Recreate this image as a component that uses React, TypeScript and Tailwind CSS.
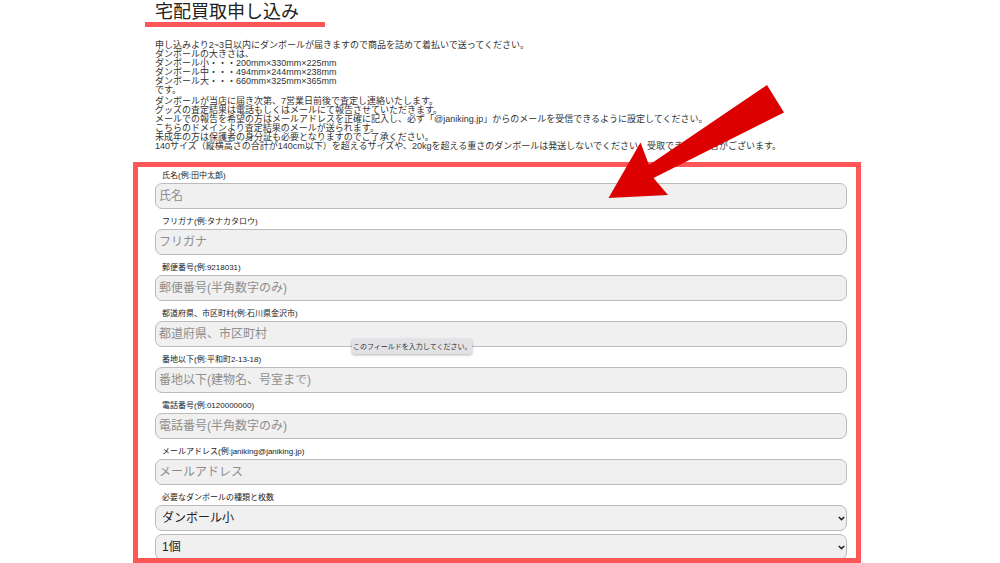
import React from "react";

type Field = {
  id: string;
  label: string;
  placeholder: string;
  type: string;
  hint?: string;
};

const fields: Field[] = [
  { id: "name", label: "氏名(例:田中太郎)", placeholder: "氏名", type: "text" },
  { id: "kana", label: "フリガナ(例:タナカタロウ)", placeholder: "フリガナ", type: "text" },
  { id: "zip", label: "郵便番号(例:9218031)", placeholder: "郵便番号(半角数字のみ)", type: "text" },
  {
    id: "city",
    label: "都道府県、市区町村(例:石川県金沢市)",
    placeholder: "都道府県、市区町村",
    type: "text",
    hint: "このフィールドを入力してください。",
  },
  { id: "street", label: "番地以下(例:平和町2-13-18)", placeholder: "番地以下(建物名、号室まで)", type: "text" },
  { id: "tel", label: "電話番号(例:0120000000)", placeholder: "電話番号(半角数字のみ)", type: "tel" },
  { id: "mail", label: "メールアドレス(例:janiking@janiking.jp)", placeholder: "メールアドレス", type: "email" },
];

const boxNotes = [
  "申し込みより2~3日以内にダンボールが届きますので商品を詰めて着払いで送ってください。",
  "ダンボールの大きさは、",
  "ダンボール小・・・200mm×330mm×225mm",
  "ダンボール中・・・494mm×244mm×238mm",
  "ダンボール大・・・660mm×325mm×365mm",
  "です。",
];

const reviewNotes = [
  "ダンボールが当店に届き次第、7営業日前後で査定し連絡いたします。",
  "グッズの査定結果は電話もしくはメールにて報告させていただきます。",
  "メールでの報告を希望の方はメールアドレスを正確に記入し、必ず「@janiking.jp」からのメールを受信できるように設定してください。",
  "こちらのドメインより査定結果のメールが送られます。",
  "未成年の方は保護者の身分証も必要となりますのでご了承ください。",
  "140サイズ（縦横高さの合計が140cm以下）を超えるサイズや、20kgを超える重さのダンボールは発送しないでください。受取できない場合がございます。",
];

function Notes({ lines }: { lines: string[] }) {
  return (
    <p>
      {lines.map((line) => (
        <span key={line} className="block">
          {line}
        </span>
      ))}
    </p>
  );
}

function FieldLabel({ htmlFor, children }: { htmlFor: string; children: React.ReactNode }) {
  return (
    <label htmlFor={htmlFor} className="block h-4 px-[7px] pt-px text-[8px] leading-4 text-[#222]">
      {children}
    </label>
  );
}

function TextField({ field }: { field: Field }) {
  return (
    <div className="relative">
      <FieldLabel htmlFor={field.id}>{field.label}</FieldLabel>
      <input
        id={field.id}
        type={field.type}
        placeholder={field.placeholder}
        className="block h-[26px] w-full rounded-[7px] border border-[#bbb] bg-[#f0f0f0] px-[3px] text-[12px] text-[#333] outline-none placeholder:text-[#8e8e8e]"
      />
      {field.hint && (
        <div
          role="tooltip"
          className="absolute top-[34px] left-[197px] rounded-[2px] bg-[#e0e2e5] px-px text-[7px] leading-[15px] whitespace-nowrap text-[#333] shadow-[0_1px_3px_rgba(0,0,0,0.3)]"
        >
          {field.hint}
        </div>
      )}
    </div>
  );
}

function SelectBox({ id, label, options }: { id: string; label?: string; options: string[] }) {
  return (
    <div className="grid items-center">
      <select
        id={id}
        aria-label={label}
        className="col-start-1 row-start-1 h-[26px] w-full appearance-none rounded-[7px] border border-[#bbb] bg-[#f0f0f0] px-1.5 text-[12px] text-[#222] outline-none"
      >
        {options.map((option) => (
          <option key={option}>{option}</option>
        ))}
      </select>
      <svg
        viewBox="0 0 7 5"
        className="pointer-events-none col-start-1 row-start-1 mr-0.5 h-[5px] w-[7px] justify-self-end"
        fill="none"
        stroke="#222"
        strokeWidth="1.5"
      >
        <path d="M0.8 1 L3.5 3.6 L6.2 1" />
      </svg>
    </div>
  );
}

export default function App() {
  return (
    <main
      lang="ja"
      className="w-full bg-white pr-1.5 font-['Liberation_Sans','Noto_Sans_CJK_JP',sans-serif] text-[#222]"
    >
      <div className="relative mx-auto max-w-[728px]">
        <header className="px-3">
          <h1 className="px-2.5 pt-0.5 text-[18px] leading-5">宅配買取申し込み</h1>
          <div className="h-[5px] w-[180px] bg-[#ff5757]" />
        </header>

        <section className="flex flex-col gap-0.5 px-[22px] pt-3.5 text-[9px] leading-[9px] whitespace-nowrap text-[#333]">
          <Notes lines={boxNotes} />
          <Notes lines={reviewNotes} />
        </section>

        <form className="mt-[11px] flex flex-col gap-1 overflow-hidden border-5 border-[#ff5757] pr-[9px] pl-[17px]">
          {fields.map((field) => (
            <TextField key={field.id} field={field} />
          ))}
          <div className="-mb-0.5">
            <FieldLabel htmlFor="box-size">必要なダンボールの種類と枚数</FieldLabel>
            <div className="flex flex-col gap-[3px]">
              <SelectBox id="box-size" options={["ダンボール小", "ダンボール中", "ダンボール大"]} />
              <SelectBox id="box-count" label="枚数" options={["1個", "2個", "3個"]} />
            </div>
          </div>
        </form>

        <svg
          viewBox="0 0 176 114"
          className="pointer-events-none absolute top-[85px] left-[475px] h-[114px] w-[176px]"
          aria-hidden="true"
        >
          <path d="M0.5 113 L32.5 57.5 L41 80 L159 0 L176 27.5 L45.5 93 L60 110 Z" fill="#dd0000" />
        </svg>
      </div>
    </main>
  );
}
